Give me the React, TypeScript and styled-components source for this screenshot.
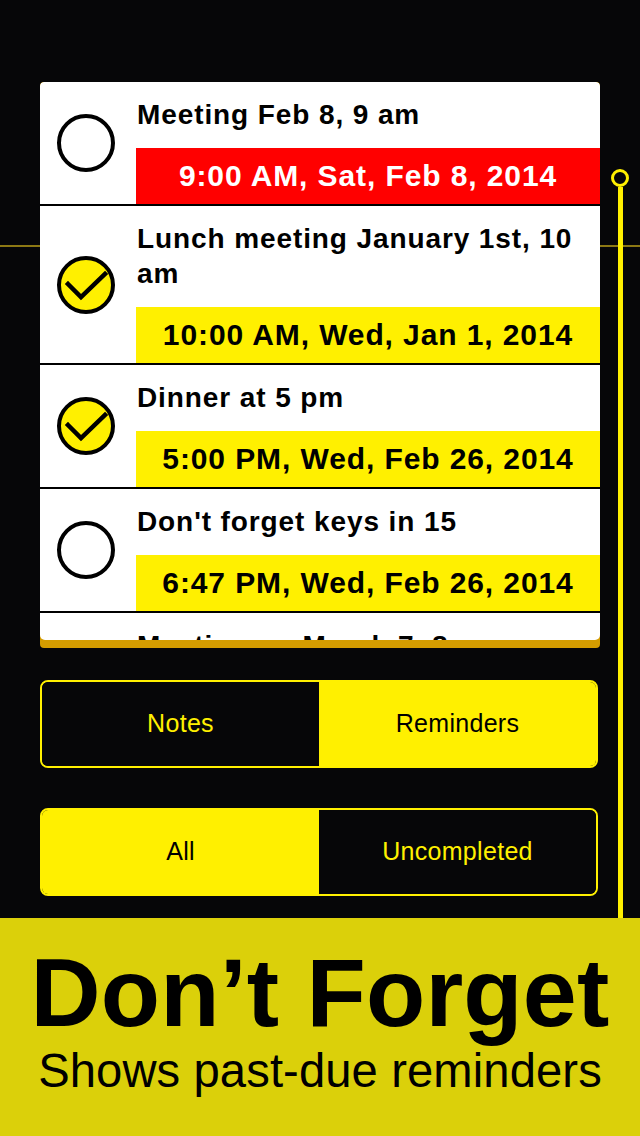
import React from "react";
import styled, { createGlobalStyle } from "styled-components";

const YELLOW = "#fff000";
const FONT = `"Liberation Sans", Arial, Helvetica, sans-serif`;

const GlobalStyle = createGlobalStyle`
  html, body { margin: 0; padding: 0; background: #060608; }
  body { font-family: ${FONT}; }
  * { box-sizing: border-box; }
`;

const Page = styled.div`
  position: relative;
  width: 640px;
  height: 1136px;
  background: #060608;
  display: flex;
  flex-direction: column;
  padding-top: 82px;
  overflow: hidden;
`;

const GuideLine = styled.div`
  position: absolute;
  left: 0;
  right: 0;
  top: 245px;
  height: 2px;
  background: #8c7814;
`;

const Slider = styled.div`
  position: absolute;
  left: 611px;
  top: 169px;
  width: 18px;
  height: 760px;
  display: flex;
  flex-direction: column;
  align-items: center;
`;

const SliderKnob = styled.div`
  width: 18px;
  height: 18px;
  border-radius: 50%;
  border: 3.5px solid ${YELLOW};
  background: #060608;
  flex: none;
`;

const SliderTrack = styled.div`
  width: 5px;
  flex: 1;
  background: ${YELLOW};
`;

const Card = styled.div`
  position: relative;
  z-index: 1;
  margin: 0 40px;
  height: 566px;
  background: #d49c00;
  border-radius: 4px;
  overflow: hidden;
  flex: none;
  padding-bottom: 8px;
`;

const CardInner = styled.div`
  height: 100%;
  background: #fff;
  border-radius: 4px 4px 5px 5px;
  overflow: hidden;
`;

const Row = styled.div`
  display: grid;
  grid-template-columns: 96px 1fr;
  border-bottom: 2px solid #000;
`;

const CheckCell = styled.div`
  display: flex;
  align-items: center;
  padding-left: 17px;
`;

const Circle = styled.div<{ $checked: boolean }>`
  width: 58px;
  height: 58px;
  border-radius: 50%;
  border: 4px solid #000;
  background: ${(p) => (p.$checked ? YELLOW : "#fff")};
`;

const CircleWrap = styled.div`
  position: relative;
  width: 58px;
  height: 58px;
  display: flex;
`;

const Body = styled.div`
  display: flex;
  flex-direction: column;
`;

const Title = styled.div`
  padding: 15px 12px 16px 1px;
  font-size: 28px;
  line-height: 35px;
  font-weight: 700;
  letter-spacing: 0.9px;
  color: #000;
`;

const DateBox = styled.div<{ $overdue: boolean }>`
  height: 56px;
  display: flex;
  align-items: center;
  justify-content: center;
  background: ${(p) => (p.$overdue ? "#ff0000" : YELLOW)};
  color: ${(p) => (p.$overdue ? "#fff" : "#000")};
  font-size: 30px;
  font-weight: 700;
  letter-spacing: 0.9px;
`;

const Controls = styled.div`
  display: flex;
  flex-direction: column;
  gap: 40px;
  margin-top: 32px;
`;

const Segmented = styled.div`
  margin: 0 42px 0 40px;
  height: 88px;
  border: 2px solid ${YELLOW};
  border-radius: 8px;
  overflow: hidden;
  display: flex;
  flex: none;
`;

const Segment = styled.div<{ $active: boolean }>`
  flex: 1;
  display: flex;
  align-items: center;
  justify-content: center;
  padding-bottom: 2px;
  background: ${(p) => (p.$active ? YELLOW : "#060608")};
  color: ${(p) => (p.$active ? "#000" : YELLOW)};
  font-size: 25px;
  letter-spacing: 0.3px;
`;

const Banner = styled.div`
  position: relative;
  z-index: 2;
  margin-top: auto;
  height: 218px;
  background: #dbd00a;
  display: flex;
  flex-direction: column;
  align-items: center;
  padding-top: 23px;
  color: #000;
`;

const Headline = styled.div`
  font-size: 97px;
  font-weight: 700;
  line-height: 104px;
  letter-spacing: 0.2px;
`;

const Subline = styled.div`
  font-size: 47.2px;
  line-height: 52px;
  letter-spacing: 0.1px;
`;

const Check = () => (
  <svg width="58" height="58" viewBox="0 0 58 58" style={{ position: "absolute", left: 0, top: 0 }}>
    <polyline
      points="11,28 24,41 48,18"
      fill="none"
      stroke="#000"
      strokeWidth="4.5"
      strokeLinecap="square"
    />
  </svg>
);

type Item = { title: string; date: string; checked: boolean; overdue: boolean };

const items: Item[] = [
  { title: "Meeting Feb 8, 9 am", date: "9:00 AM, Sat, Feb 8, 2014", checked: false, overdue: true },
  { title: "Lunch meeting January 1st, 10 am", date: "10:00 AM, Wed, Jan 1, 2014", checked: true, overdue: false },
  { title: "Dinner at 5 pm", date: "5:00 PM, Wed, Feb 26, 2014", checked: true, overdue: false },
  { title: "Don't forget keys in 15", date: "6:47 PM, Wed, Feb 26, 2014", checked: false, overdue: false },
  { title: "Meeting on March 7, 8 am", date: "8:00 AM, Fri, Mar 7, 2014", checked: false, overdue: false },
];

export default function App() {
  return (
    <>
      <GlobalStyle />
      <Page>
        <GuideLine />
        <Slider>
          <SliderKnob />
          <SliderTrack />
        </Slider>
        <Card>
          <CardInner>
            {items.map((it) => (
              <Row key={it.title}>
                <CheckCell>
                  <CircleWrap>
                    <Circle $checked={it.checked} />
                    {it.checked && <Check />}
                  </CircleWrap>
                </CheckCell>
                <Body>
                  <Title>{it.title}</Title>
                  <DateBox $overdue={it.overdue}>{it.date}</DateBox>
                </Body>
              </Row>
            ))}
          </CardInner>
        </Card>
        <Controls>
          <Segmented>
            <Segment $active={false}>Notes</Segment>
            <Segment $active={true}>Reminders</Segment>
          </Segmented>
          <Segmented>
            <Segment $active={true}>All</Segment>
            <Segment $active={false}>Uncompleted</Segment>
          </Segmented>
        </Controls>
        <Banner>
          <Headline>Don’t Forget</Headline>
          <Subline>Shows past-due reminders</Subline>
        </Banner>
      </Page>
    </>
  );
}
